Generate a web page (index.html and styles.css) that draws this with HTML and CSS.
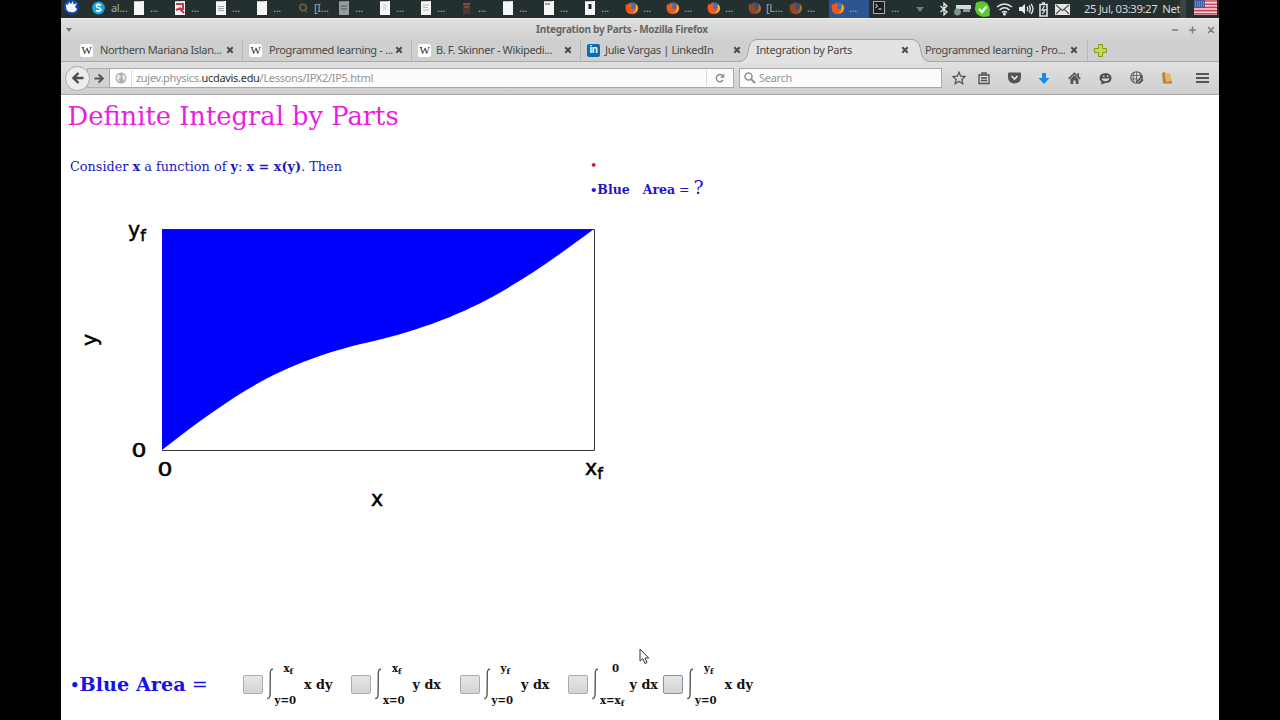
FILE: index.html
```html
<!DOCTYPE html>
<html lang="en">
<head>
  <meta charset="UTF-8">
  <title>Integration by Parts</title>
  <link rel="stylesheet" href="styles.css">
</head>
<body>

<svg class="defs" width="0" height="0">
  <symbol id="fox" viewBox="0 0 14 14">
    <circle cx="7" cy="6.8" r="5.6" fill="#3d6fb5"/>
    <path d="M1 3 Q2 3 3 4 Q4 2 6 1.5 Q5 3 6.5 4 L8 5 Q6 5 6 7 Q7 9 9.5 7.5 Q11 6 9.5 3 Q13 4 13.3 7.5 Q12.5 13 7 13.2 Q1 13 .6 7.5 Q.5 5 1 3Z" fill="#ee5a1c"/>
    <path d="M11 3 Q13.5 5 12.8 8 Q11.5 12 7.5 12 Q11 10 11 6.500Z" fill="#ffb52e"/>
  </symbol>
  <symbol id="doc" viewBox="0 0 10 14">
    <rect width="10" height="14" fill="#f4f5f4"/>
    <path d="M0 .5 H8" stroke="#bfc5c2"/>
  </symbol>
  <symbol id="x" viewBox="0 0 8 8">
    <path d="M1.300 1.300 L6.700 6.700 M6.700 1.300 L1.300 6.700" stroke="#4b4b4b" stroke-width="2"/>
  </symbol>
  <symbol id="int" viewBox="0 0 8 32">
    <path d="M6 1.500 Q3.600 .5 3.300 5 L3.100 26 Q2.800 31.300 .2 30.300" fill="none" stroke="#5c564e" stroke-width="1.400"/>
  </symbol>
</svg>

<div class="screen">

  <div class="panel">
    <div class="task first">
      <svg width="15" height="15" viewBox="0 0 15 15"><circle cx="7.500" cy="7" r="7.500" fill="#1046ad"/><path d="M2 6 Q1 3 4 5 L5 2 L7 4 L9 1 L9.500 4.500 L13 3 L11 7 L13 9 Q11 13 7 12 Q2 12 2 6Z" fill="#f2f6ff"/></svg>
    </div>
    <div class="task">
      <svg width="13" height="14" viewBox="0 0 13 14"><circle cx="6.500" cy="7" r="6.400" fill="#19a5dc"/><path d="M9 4.500 Q6.500 2.500 4.500 4.300 Q4 6 6.500 6.700 Q9.500 7.500 8.500 9.300 Q6.500 11 4 9.300" fill="none" stroke="#fff" stroke-width="1.600"/></svg>
      <span>al...</span>
    </div>
    <div class="task"><svg width="10" height="14"><use href="#doc"/></svg><span>...</span></div>
    <div class="task"><svg width="10" height="14"><use href="#doc"/><path d="M1 3 H8 V8 H5 L9 12 M1 9 L6 7" fill="none" stroke="#cf3348" stroke-width="2"/></svg><span>...</span></div>
    <div class="task"><svg width="10" height="14"><use href="#doc"/><path d="M2 5.500 H8 M2 7.500 H8 M2 9.500 H8" stroke="#a2a5a3"/></svg><span>...</span></div>
    <div class="task"><svg width="10" height="14"><use href="#doc"/></svg><span>...</span></div>
    <div class="task"><svg width="10" height="14" viewBox="0 0 10 14"><circle cx="5" cy="6.500" r="3.200" fill="none" stroke="#6b5b43" stroke-width="1.800"/><path d="M7 9 L9 12" stroke="#77694f"/></svg><span>[I...</span></div>
    <div class="task"><svg class="dim" width="10" height="14"><use href="#doc"/><path d="M2 5 H8 M2 8 H8" stroke="#777"/></svg><span>...</span></div>
    <div class="task"><svg width="10" height="14"><use href="#doc"/><path d="M3 4 H7 M3 6 H6 M3 8 H6" stroke="#c6cbc8"/></svg><span>...</span></div>
    <div class="task"><svg width="10" height="14"><use href="#doc"/><path d="M2 4 H8 M2 6.500 H7 M2 9 H8" stroke="#aeb4b1"/></svg><span>...</span></div>
    <div class="task"><svg width="10" height="14"><rect x="1" y="2" width="7" height="11" fill="#50362f"/><path d="M1 3 H8 M2 6 H7" stroke="#a2664e"/></svg><span>...</span></div>
    <div class="task"><svg width="10" height="14"><use href="#doc"/></svg><span>...</span></div>
    <div class="task"><svg width="10" height="14"><use href="#doc"/><path d="M1 3 H6" stroke="#444"/></svg><span>...</span></div>
    <div class="task"><svg width="10" height="14"><use href="#doc"/><path d="M5 3 V8" stroke="#222" stroke-width="3"/></svg><span>...</span></div>
    <div class="task fox"><svg width="14" height="14"><use href="#fox"/></svg><span>...</span></div>
    <div class="task fox"><svg width="14" height="14"><use href="#fox"/></svg><span>...</span></div>
    <div class="task fox"><svg width="14" height="14"><use href="#fox"/></svg><span>...</span></div>
    <div class="task fox"><svg class="dim" width="14" height="14"><use href="#fox"/></svg><span>[L...</span></div>
    <div class="task fox"><svg class="dim" width="14" height="14"><use href="#fox"/></svg><span>...</span></div>
    <div class="task fox active"><svg width="14" height="14"><use href="#fox"/></svg><span>...</span></div>
    <div class="task term"><svg width="12" height="13" viewBox="0 0 12 13"><rect x=".5" y=".5" width="11" height="12" fill="#1c1f1f" stroke="#a6aaa8"/><path d="M2.500 3 L4.500 5 L2.500 7 M5.500 8 H8.500" fill="none" stroke="#fff"/></svg><span>...</span></div>
    <svg class="more" width="8" height="5" viewBox="0 0 8 5"><path d="M0 0 H8 L4 5Z" fill="#77807d"/></svg>

    <div class="tray">
      <svg width="10" height="14" viewBox="0 0 10 14"><path d="M1.500 4 L8 10 L5 12.800 V1.200 L8 4 L1.500 10" fill="none" stroke="#e8eae9" stroke-width="1.300"/></svg>
      <svg width="18" height="14" viewBox="0 0 18 14"><path d="M2 3 H17 V7 H2Z" fill="#d5d8d6"/><path d="M9 7 H16 V10 H9Z" fill="#8f9693"/><circle cx="3.500" cy="10" r="3.400" fill="#7d9888"/></svg>
      <svg width="17" height="17" viewBox="0 0 17 17"><path d="M4 1 Q9 -1 13 2 Q17 6 15.500 12 Q17 16 13 15.500 Q7 17 3 13 Q0 9 1.500 5 Q1 1 4 1Z" fill="#5cc931"/><path d="M5 8 L8 11 L12.500 5.500" fill="none" stroke="#fff" stroke-width="2.200"/></svg>
      <svg width="17" height="14" viewBox="0 0 17 14"><path d="M1 5 Q8.500 -1 16 5 M3.500 8 Q8.500 3.500 13.500 8 M6 10.500 Q8.500 8.500 11 10.500" fill="none" stroke="#e8eae9" stroke-width="1.600"/><circle cx="8.500" cy="12" r="1.500" fill="#e8eae9"/></svg>
      <svg width="16" height="14" viewBox="0 0 16 14"><path d="M1 5 H3.500 L7 2 V12 L3.500 9 H1Z" fill="#e8eae9"/><path d="M9 5 Q10.500 7 9 9 M11 3.500 Q13.500 7 11 10.500 M13 2 Q17 7 13 12" fill="none" stroke="#e8eae9" stroke-width="1.300"/></svg>
      <svg width="9" height="15" viewBox="0 0 9 15"><path d="M1 2.500 H8 V14 H1Z M3 1 H6" fill="none" stroke="#e0e3e1" stroke-width="1.600"/><path d="M5.500 4 L3 8 H6 L3.500 12" fill="none" stroke="#e0e3e1" stroke-width="1.300"/></svg>
      <svg width="15" height="11" viewBox="0 0 15 11"><rect width="15" height="11" fill="#e6e8e7"/><path d="M1 1 L7.500 6.500 L14 1 M1 10 L5.500 5.500 M14 10 L9.500 5.500" fill="none" stroke="#4a5351" stroke-width="1.100"/></svg>
    </div>
    <span class="clock">25 Jul, 03:39:27&nbsp; Net</span>
    <span class="handle"></span>
    <svg class="flag" width="23" height="15" viewBox="0 0 23 15"><rect width="23" height="15" fill="#efdfe2"/><path d="M0 1 H23 M0 4.200 H23 M0 7.400 H23 M0 10.600 H23 M0 13.800 H23" stroke="#d2424f" stroke-width="1.600"/><rect width="11" height="8" fill="#44599c"/><path d="M1 2 H10 M1 4 H10 M1 6 H10" stroke="#a7b2d7" stroke-dasharray="1 1"/></svg>
  </div>

  <div class="titlebar">
    <svg width="6" height="4" viewBox="0 0 6 4"><path d="M0 0 H6 L3 4Z" fill="#767676"/></svg>
    <b>Integration by Parts - Mozilla Firefox</b>
    <svg width="44" height="8" viewBox="0 0 44 8"><path d="M1 4 H7 M18 4 H25 M21.500 .5 V7.500 M37 1 L43 7 M43 1 L37 7" stroke="#7d7d7d" stroke-width="1.500"/></svg>
  </div>

  <div class="tabs">
    <div class="tab wide-gap"><i class="fav">W</i><span>Northern Mariana Islan...</span><svg width="8" height="8"><use href="#x"/></svg></div>
    <div class="tab wide-gap"><i class="fav">W</i><span>Programmed learning - ...</span><svg width="8" height="8"><use href="#x"/></svg></div>
    <div class="tab"><i class="fav">W</i><span>B. F. Skinner - Wikipedi...</span><svg width="8" height="8"><use href="#x"/></svg></div>
    <div class="tab linked"><i class="fav in">in</i><span>Julie Vargas | LinkedIn</span><svg width="8" height="8"><use href="#x"/></svg></div>
    <div class="tab current">
      <svg class="shape" width="191" height="24" viewBox="0 0 191 24"><path d="M0 22.500 Q6.500 22.500 8.500 15 L10 8 Q12 .5 18 .5 H173 Q179 .5 181 8 L182.500 15 Q184.500 22.500 191 22.500 V24 H0Z" fill="#e2e2e2"/><path d="M0 22.500 Q6.500 22.500 8.500 15 L10 8 Q12 .5 18 .5 H173 Q179 .5 181 8 L182.500 15 Q184.500 22.500 191 22.500" fill="none" stroke="#a3a3a3"/></svg>
      <span>Integration by Parts</span><svg width="8" height="8"><use href="#x"/></svg>
    </div>
    <div class="tab last"><span>Programmed learning - Pro...</span><svg width="8" height="8"><use href="#x"/></svg></div>
    <svg class="plus" width="13" height="13" viewBox="0 0 13 13"><path d="M4.500 .5 H8.500 V4.500 H12.500 V8.500 H8.500 V12.500 H4.500 V8.500 H.5 V4.500 H4.500Z" fill="#c8dc3c" stroke="#83952a"/></svg>
  </div>

  <div class="toolbar">
    <div class="back"><svg width="12" height="12" viewBox="0 0 12 12"><path d="M11.500 6 H2 M6.500 1 L1.500 6 L6.500 11" fill="none" stroke="#4a4a4a" stroke-width="2.400"/></svg></div>
    <div class="forward"><svg width="10" height="11" viewBox="0 0 12 12"><path d="M.5 6 H10 M5.500 1 L10.500 6 L5.500 11" fill="none" stroke="#555" stroke-width="2.400"/></svg></div>
    <div class="url">
      <svg width="12" height="12" viewBox="0 0 12 12"><circle cx="6" cy="6" r="5.500" fill="#adadad"/><path d="M2 3 L5 2.500 L6 5 L4 7 L5 10 L3 9 L1.500 6Z M7.500 2 L10 3.500 L10.500 7 L8.500 9 L7.500 6Z" fill="#e6e6e6"/></svg>
      <span class="address">zujev.physics.<em>ucdavis.edu</em>/Lessons/IPX2/IP5.html</span>
      <span class="reload"><svg width="10" height="10" viewBox="0 0 10 10"><path d="M8 7 A3.600 3.600 0 1 1 7.600 2.700" fill="none" stroke="#8e8e8e" stroke-width="1.500"/><path d="M9.300 .5 V4.800 H5Z" fill="#8e8e8e"/></svg></span>
    </div>
    <div class="search">
      <svg width="12" height="12" viewBox="0 0 12 12"><circle cx="4.500" cy="4.500" r="3.500" fill="none" stroke="#939393" stroke-width="1.600"/><path d="M7 7 L11 11" stroke="#939393" stroke-width="2.200"/></svg>
      <span>Search</span>
    </div>
    <div class="buttons">
      <svg width="14" height="14" viewBox="0 0 14 14"><path d="M7 1.200 L8.700 5.200 L13 5.600 L9.800 8.400 L10.800 12.700 L7 10.400 L3.200 12.700 L4.200 8.400 L1 5.600 L5.300 5.200Z" fill="none" stroke="#555" stroke-width="1.300"/></svg>
      <svg width="12" height="13" viewBox="0 0 12 13"><path d="M1 3 H11 V11.500 H1Z M4 3 V1 H8 V3 M3 6 H9 M3 8.500 H9" fill="none" stroke="#505050" stroke-width="1.300"/></svg>
      <svg width="13" height="12" viewBox="0 0 13 12"><path d="M0 1.500 Q0 .5 1 .5 H12 Q13 .5 13 1.500 V5 Q13 11 6.500 11.500 Q0 11 0 5Z" fill="#555"/><path d="M3.500 4 L6.500 7 L9.500 4" fill="none" stroke="#e4e4e4" stroke-width="1.700"/></svg>
      <svg width="12" height="13" viewBox="0 0 12 13"><path d="M4 1 H8 V6 H11.500 L6 12 L.5 6 H4Z" fill="#1888ee"/></svg>
      <svg width="13" height="12" viewBox="0 0 13 12"><path d="M.7 6.800 L6.500 1.300 L12.300 6.800" fill="none" stroke="#555" stroke-width="1.600"/><path d="M9.500 1 H11 V5 L9.500 3.500Z M2.500 7 L6.500 3.300 L10.500 7 V12 H7.700 V8.500 H5.300 V12 H2.500Z" fill="#555"/></svg>
      <svg width="13" height="13" viewBox="0 0 13 13"><path d="M6.500 1 Q12.500 1.500 12.500 6 Q12.500 11 6.500 11 L2 12.500 L2.500 10 Q.5 8.500 .5 6 Q.5 1.500 6.500 1Z" fill="#505050"/><path d="M2.500 6.500 H10.500 Q9.500 9.300 6.500 9.300 Q3.500 9.300 2.500 6.500Z M4 3.500 H5.500 V5 H4Z M8 3.500 H9.500 V5 H8Z" fill="#d6d6d6"/></svg>
      <svg width="14" height="14" viewBox="0 0 14 14"><circle cx="6.500" cy="6.500" r="5.700" fill="none" stroke="#555" stroke-width="1.100"/><path d="M1 4.500 H12 M1 8 H8 M6.500 1 V12 M4 1.500 Q2 6 4.500 12 M9 1.500 Q11 4 10.500 6" fill="none" stroke="#666" stroke-width=".9"/><path d="M12.500 5 L6.500 11.500 M9 12.500 L13 8.500" stroke="#4c4c4c" stroke-width="1.700"/></svg>
      <svg width="12" height="12" viewBox="0 0 12 12"><path d="M1 1 L4 0 L5 8 L10.500 7.500 L11 11.500 L2 11.500Z" fill="#b9813d"/><path d="M4 .5 L9.500 1.500 L10.500 9 L5 10Z" fill="#e0b670"/></svg>
      <svg width="13" height="12" viewBox="0 0 13 12"><path d="M0 2 H13 M0 6 H13 M0 10 H13" stroke="#555" stroke-width="2"/></svg>
    </div>
  </div>

  <div class="page">
    <h1><span>Definite Integral by Parts</span></h1>

    <div class="intro">
      <p><span>Consider <b>x</b> a function of <b>y</b>: <b>x = x(y)</b>. Then</span></p>
      <div class="question">
        <span class="red">•</span>
        <span class="ask"><b><small>•</small>Blue &nbsp; Area</b> = <big>?</big></span>
      </div>
    </div>

    <svg class="plot" width="560" height="310" viewBox="61 210 560 310">
      <path d="M162 229.500 H594.500 V450.500 H162" fill="#fff" stroke="#333"/>
      <path d="M162 229 H594 C512 290 465 318 378 340 C288 360 244 386 162 450Z" fill="#0000ff"/>
      <path d="M162 229.500 H594" stroke="#1a1a8c"/>
      <text x="128" y="236.500">y<tspan dy="4" font-size="16">f</tspan></text>
      <text x="131.500" y="457" font-size="19" textLength="15" lengthAdjust="spacingAndGlyphs">0</text>
      <text x="157.500" y="476" font-size="19" textLength="15" lengthAdjust="spacingAndGlyphs">0</text>
      <text x="585" y="475">x<tspan dy="4" font-size="16">f</tspan></text>
      <text x="371" y="505.500">x</text>
      <text transform="translate(97 346) rotate(-90)">y</text>
    </svg>

    <div class="answers">
      <div class="label"><b><small>•</small>Blue Area</b> =</div>
      <div class="option"><span class="box"></span><svg width="8" height="32"><use href="#int"/></svg><div class="limits"><span class="hi">x<sub>f</sub></span><span>y=0</span></div><b>x dy</b></div>
      <div class="option"><span class="box"></span><svg width="8" height="32"><use href="#int"/></svg><div class="limits"><span class="hi">x<sub>f</sub></span><span>x=0</span></div><b>y dx</b></div>
      <div class="option"><span class="box"></span><svg width="8" height="32"><use href="#int"/></svg><div class="limits"><span class="hi">y<sub>f</sub></span><span>y=0</span></div><b>y dx</b></div>
      <div class="option narrow"><span class="box"></span><svg width="8" height="32"><use href="#int"/></svg><div class="limits"><span class="hi">0</span><span>x=x<sub>f</sub></span></div><b>y dx</b></div>
      <div class="option"><span class="box hover"></span><svg width="8" height="32"><use href="#int"/></svg><div class="limits"><span class="hi">y<sub>f</sub></span><span>y=0</span></div><b>x dy</b></div>
    </div>
  </div>

  <svg class="cursor" width="11" height="17" viewBox="0 0 11 17"><path d="M1 1 V13 L3.800 10.600 L6 15.500 L8 14.600 L6 10 H9.700Z" fill="#fff" stroke="#333"/></svg>
</div>

</body>
</html>
```
FILE: styles.css
```css
body {
  margin: 0;
  background: #000;
  font-family: "Noto Sans", "Open Sans", sans-serif;
  overflow: hidden;
}
svg {
  flex: none;
}
.defs {
  position: absolute;
}
.screen {
  position: relative;
  width: 1158px;
  height: 720px;
  margin: 0 auto;
  background: #fff;
  overflow: hidden;
  white-space: nowrap;
}

/* desktop panel */
.panel {
  display: flex;
  align-items: center;
  height: 18px;
  background: #243030;
  color: #d5d8d7;
  font-size: 11px;
  overflow: hidden;
}
.task {
  display: flex;
  align-items: center;
  box-sizing: border-box;
  flex: none;
  width: 41px;
  height: 18px;
  padding: 0 0 3px 3px;
  gap: 6px;
}
.task span {
  color: #a5abaa;
  letter-spacing: -.3px;
}
.task.first {
  width: 28px;
}
.task.fox {
  padding-left: 2px;
  gap: 4px;
}
.task:nth-child(2) {
  width: 42px;
}
.task.active {
  width: 40px;
  background: #2d5592;
  margin-left: 1px;
}
.task.term {
  padding-left: 4px;
}
.dim {
  opacity: .55;
}
.more {
  margin: 0 15px 0 6px;
}
.tray {
  display: flex;
  align-items: center;
  gap: 5px;
  width: 136px;
  height: 15px;
  flex: none;
}
.tray svg:nth-child(2) {
  margin-right: -3px;
}
.tray svg:last-child {
  margin-left: 2px;
}
.clock {
  margin-left: 9px;
  width: 96px;
  flex: none;
  letter-spacing: -.4px;
  font-size: 11.3px;
  line-height: 15px;
  padding-bottom: 2px;
}
.handle {
  width: 6px;
  height: 18px;
  flex: none;
  background: #3b4443;
}
.flag {
  margin: 0 0 3px 8px;
}

/* window frame */
.titlebar {
  display: flex;
  justify-content: space-between;
  align-items: center;
  height: 22px;
  box-sizing: border-box;
  padding: 0 4px 0 5px;
  background: linear-gradient(#e0e0e0, #d0d0d0);
  border-top: 1px solid #f0f0f0;
  color: #666;
  font-size: 10px;
  letter-spacing: -.25px;
}
.titlebar b {
  margin: -2px 0 0 1px;
}
.tabs {
  display: flex;
  height: 22px;
  box-sizing: border-box;
  padding-left: 13px;
  background: #cfcfcf;
  border-bottom: 1px solid #a8a8a8;
  color: #484848;
  font-size: 11px;
  letter-spacing: -.34px;
}
.tab {
  position: relative;
  display: flex;
  align-items: center;
  box-sizing: border-box;
  width: 169px;
  height: 20px;
  padding: 0 8px 0 6px;
  border-right: 1px solid #b5b5b5;
}
.tab span {
  position: relative;
  flex: 1;
  padding-bottom: 2px;
}
.tab > svg:last-child {
  position: relative;
}
.fav {
  width: 13px;
  height: 13px;
  margin-right: 5px;
  border-radius: 2px;
  background: #fff;
  color: #222;
  font: 11px/13px "Liberation Serif", serif;
  text-align: center;
}
.wide-gap .fav {
  margin-right: 7px;
}
.fav.in {
  background: #0b6cab;
  color: #fff;
  font: bold 10px/12px "Liberation Sans", sans-serif;
}
.tab.linked {
  border-right-color: transparent;
}
.tab.current {
  padding-right: 10px;
  border: 0;
}
.shape {
  position: absolute;
  left: -11px;
  top: -1px;
}
.tab.last {
  padding-right: 9px;
}
.plus {
  margin: 4px 0 0 6px;
}

/* navigation toolbar */
.toolbar {
  display: flex;
  align-items: center;
  height: 33px;
  box-sizing: border-box;
  padding-left: 4px;
  background: linear-gradient(#e0e0e0, #cecece);
  border-bottom: 1px solid #aaa;
  font-size: 11px;
  letter-spacing: -.3px;
}
.back {
  display: flex;
  justify-content: center;
  align-items: center;
  box-sizing: border-box;
  width: 25px;
  height: 25px;
  border: 1px solid #aaa;
  border-radius: 50%;
  background: #ededed;
  z-index: 1;
}
.forward {
  display: flex;
  align-items: center;
  justify-content: center;
  box-sizing: border-box;
  width: 22px;
  height: 20px;
  margin-left: -3px;
  border: 1px solid #b0b0b0;
  border-right: 0;
  background: #d2d2d2;
}
.url,
.search {
  display: flex;
  align-items: center;
  box-sizing: border-box;
  height: 20px;
  border: 1px solid #a8a8a8;
  background: #fcfcfc;
  color: #959595;
}
.url span,
.search span {
  padding-bottom: 1px;
}
.url {
  width: 625px;
  padding-left: 5px;
}
.address {
  flex: 1;
  margin-left: 4px;
  padding-left: 4px;
  border-left: 1px solid #ddd;
}
.address em {
  font-style: normal;
  color: #333;
}
.reload {
  display: flex;
  align-items: center;
  height: 15px;
  padding: 0 8px;
  border-left: 1px solid #ddd;
}
.search {
  width: 203px;
  margin-left: 5px;
  padding-left: 4px;
  gap: 3px;
}
.buttons {
  display: flex;
  align-items: center;
  justify-content: space-between;
  flex: 1;
  padding: 0 10px 0 10px;
}
.buttons svg:first-child {
  margin-right: -6px;
}
.buttons svg:last-child {
  margin-left: 5px;
}

/* lesson */
.page {
  font-family: "DejaVu Serif", serif;
  color: #1a14d8;
}
h1 {
  height: 50px;
  margin: 0;
  padding: 6px 0 0 6.500px;
  box-sizing: border-box;
  color: #ea1ee0;
  font-size: 25.750px;
  font-weight: normal;
  line-height: 30px;
}
.intro {
  display: flex;
  height: 65px;
  color: #2019b8;
}
.intro p {
  width: 520px;
  margin: 0;
  padding: 14px 0 0 9px;
  font-size: 12.850px;
  line-height: 16px;
}
.question {
  display: flex;
  flex-direction: column;
  font-size: 12.500px;
}
.red {
  color: #d0102c;
  height: 24px;
  line-height: 42px;
}
.ask {
  line-height: 37px;
  color: #1d14d0;
}
.ask small {
  font-size: 11.500px;
}
.ask big {
  font-size: 19px;
}
.plot {
  display: block;
  font: 20.500px "DejaVu Sans", sans-serif;
  fill: #000;
}
.plot text {
  stroke: #000;
  stroke-width: .5;
}
.answers {
  display: flex;
  align-items: center;
  height: 40px;
  margin-top: 144px;
}
.label {
  width: 172.500px;
  padding-left: 9px;
  color: #1612e8;
  font-size: 19.200px;
}
.label small {
  font-size: 15px;
  vertical-align: 1px;
}
.option {
  display: flex;
  align-items: center;
  width: 108.500px;
  color: #111;
}
.option.narrow {
  width: 95px;
}
.box {
  box-sizing: border-box;
  width: 20px;
  height: 19px;
  margin-right: 4px;
  border: 1px solid #aaa;
  border-radius: 2px;
  background: linear-gradient(#e6e6e6, #d3d3d3);
  flex: none;
}
.box.hover {
  border-color: #7993b5;
}
.limits {
  display: flex;
  flex-direction: column;
  justify-content: space-between;
  width: 29.500px;
  height: 46px;
  font-size: 10.200px;
  font-weight: bold;
  line-height: 14px;
  flex: none;
}
.limits .hi {
  padding-left: 9px;
}
.narrow .hi {
  padding-left: 12px;
}
.limits sub {
  font-size: 8px;
  line-height: 0;
  vertical-align: -2px;
}
.option b {
  font-size: 12.800px;
}
.cursor {
  position: absolute;
  left: 578px;
  top: 648px;
}
```
